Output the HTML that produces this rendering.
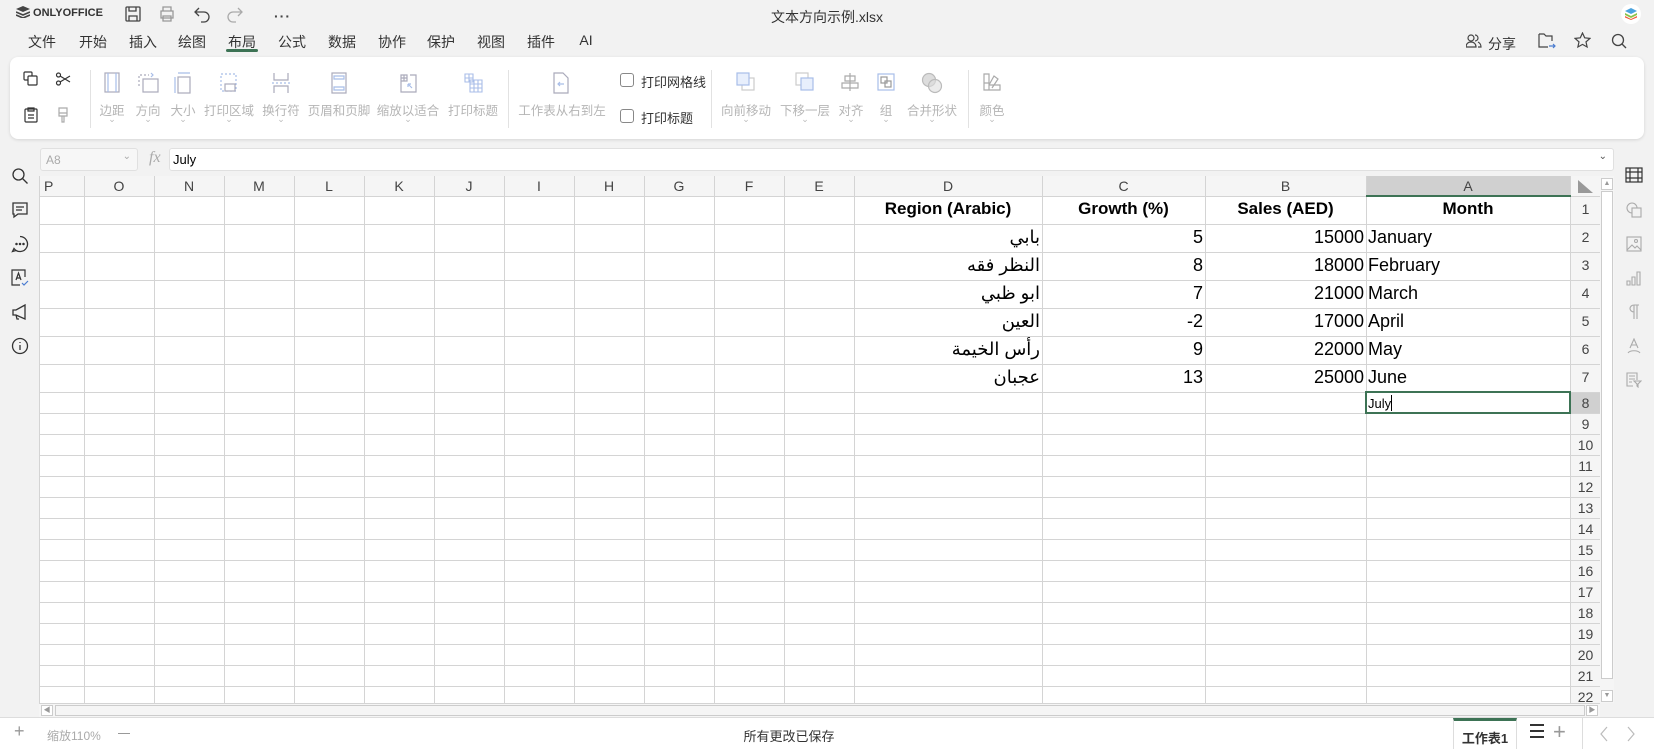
<!DOCTYPE html>
<html><head><meta charset="utf-8">
<style>
*{margin:0;padding:0;box-sizing:border-box}
body{width:1654px;height:749px;background:#f2f2f2;font-family:"Liberation Sans","Noto Sans CJK SC",sans-serif;position:relative;overflow:hidden;color:#333}
.a{position:absolute}
.tab{position:absolute;top:32px;font-size:14px;color:#333;transform:translateX(-50%)}
.lab{position:absolute;top:100px;font-size:12.5px;color:#b5b5b5;transform:translateX(-50%);white-space:nowrap}
.chev{position:absolute;top:114px;font-size:9px;color:#bbb;transform:translateX(-50%)}
.ic{position:absolute;top:72px;transform:translateX(-50%)}
.sep{position:absolute;top:70px;width:1px;height:58px;background:#e2e2e2}
.vl{position:absolute;top:176px;height:527px;width:1px;background:#d4d4d4}
.hl{position:absolute;left:39px;width:1532px;height:1px;background:#d4d4d4}
.ch{position:absolute;top:176px;height:20px;font-size:14px;color:#444;text-align:center;line-height:20px}
.rh{position:absolute;left:1571px;width:29px;text-align:center;font-size:14px;color:#444}
.c{position:absolute;font-size:18px;color:#000;white-space:nowrap;font-family:"Liberation Sans","DejaVu Sans",sans-serif}
.si{position:absolute}
</style></head><body>
<!-- title bar -->
<div class="a" style="left:16px;top:6px;font-size:11px;font-weight:bold;color:#333;letter-spacing:0">
<svg width="14" height="12" viewBox="0 0 14 12" style="vertical-align:-2px"><path d="M7 0L14 3 7 6 0 3z" fill="#444"/><path d="M0 6l7 3 7-3M0 9l7 3 7-3" stroke="#444" stroke-width="1.6" fill="none"/></svg> ONLYOFFICE</div>
<svg class="a" style="left:124px;top:5px" width="18" height="18" viewBox="0 0 18 18" fill="none" stroke="#444" stroke-width="1.3"><rect x="2" y="2" width="14" height="14" rx="1"/><path d="M5 2v4h7V2M5 16v-5h8v5"/></svg>
<svg class="a" style="left:158px;top:5px" width="18" height="18" viewBox="0 0 18 18" fill="none" stroke="#999" stroke-width="1.3"><path d="M5 6V2h8v4M3 6h12v7H3zM5 11h8v5H5z"/></svg>
<svg class="a" style="left:193px;top:5px" width="18" height="18" viewBox="0 0 18 18" fill="none" stroke="#444" stroke-width="1.3"><path d="M6 3L2 7l4 4M2 7h9a5 5 0 010 10H8"/></svg>
<svg class="a" style="left:226px;top:5px" width="18" height="18" viewBox="0 0 18 18" fill="none" stroke="#aaa" stroke-width="1.3"><path d="M12 3l4 4-4 4M16 7H7a5 5 0 000 10h3"/></svg>
<div class="a" style="left:274px;top:8px;font-size:14px;color:#444;font-weight:bold;letter-spacing:1px">···</div>
<div class="a" style="left:0;width:1654px;top:7px;text-align:center;font-size:14px;color:#333">文本方向示例.xlsx</div>
<div class="a" style="left:1621px;top:4px;width:20px;height:20px;border-radius:50%;background:#fff"></div>
<svg class="a" style="left:1625px;top:8px" width="12" height="12" viewBox="0 0 12 12"><path d="M6 0l6 3-6 3-6-3z" fill="#4aa3df"/><path d="M0 5l6 3 6-3v2l-6 3-6-3z" fill="#8bc34a"/><path d="M0 8l6 3 6-3v1.5L6 12 0 9.5z" fill="#f05a3a"/></svg>
<!-- tabs -->
<div class="tab" style="left:42px">文件</div><div class="tab" style="left:93px">开始</div><div class="tab" style="left:143px">插入</div><div class="tab" style="left:192px">绘图</div><div class="tab" style="left:242px">布局</div><div class="tab" style="left:292px">公式</div><div class="tab" style="left:342px">数据</div><div class="tab" style="left:392px">协作</div><div class="tab" style="left:441px">保护</div><div class="tab" style="left:491px">视图</div><div class="tab" style="left:541px">插件</div><div class="tab" style="left:586px">AI</div>
<div class="a" style="left:226px;top:49px;width:32px;height:3px;border-radius:2px;background:#3d7355"></div>
<svg class="a" style="left:1466px;top:34px" width="16" height="14" viewBox="0 0 16 14" fill="none" stroke="#444" stroke-width="1.2"><circle cx="5" cy="4" r="3"/><path d="M0 13c0-3 2-5 5-5s5 2 5 5zM9 1a3 3 0 010 6M12 8c2 1 3 3 3 5h-3"/></svg>
<div class="a" style="left:1488px;top:34px;font-size:14px;color:#333">分享</div>
<svg class="a" style="left:1538px;top:33px" width="18" height="16" viewBox="0 0 18 16" fill="none" stroke="#444" stroke-width="1.2"><path d="M1 1h5l2 2h6v5M1 1v13h9"/><path d="M11 13h6M15 11l2 2-2 2" stroke="#4a7bd0"/></svg>
<svg class="a" style="left:1574px;top:32px" width="17" height="17" viewBox="0 0 17 17" fill="none" stroke="#444" stroke-width="1.2"><path d="M8.5 1l2.2 4.8 5.2.6-3.9 3.5 1.1 5.1-4.6-2.6-4.6 2.6 1.1-5.1L1.1 6.4l5.2-.6z"/></svg>
<svg class="a" style="left:1611px;top:33px" width="16" height="16" viewBox="0 0 16 16" fill="none" stroke="#444" stroke-width="1.3"><circle cx="7" cy="7" r="5.5"/><path d="M11 11l4 4"/></svg>
<!-- ribbon -->
<div class="a" style="left:10px;top:57px;width:1634px;height:82px;background:#fff;border-radius:8px;box-shadow:0 1px 3px rgba(0,0,0,.12)"></div>
<svg class="a" style="left:23px;top:71px" width="16" height="16" viewBox="0 0 16 16" fill="none" stroke="#333" stroke-width="1.2"><rect x="1" y="1" width="8" height="8" rx="1"/><rect x="5" y="5" width="9" height="9" rx="1" fill="#fff"/></svg>
<svg class="a" style="left:55px;top:71px" width="16" height="16" viewBox="0 0 16 16" fill="none" stroke="#333" stroke-width="1.2"><circle cx="3.5" cy="4" r="2"/><circle cx="3.5" cy="12" r="2"/><path d="M5 5l10 6M5 11l10-6"/></svg>
<svg class="a" style="left:23px;top:107px" width="16" height="16" viewBox="0 0 16 16" fill="none" stroke="#333" stroke-width="1.2"><rect x="2" y="2" width="12" height="13" rx="1"/><path d="M5 1h6v3H5zM5 8h6M5 11h6"/></svg>
<svg class="a" style="left:55px;top:107px" width="16" height="16" viewBox="0 0 16 16" fill="none" stroke="#aaa" stroke-width="1.2"><path d="M4 1h8v8H4zM4 6h8M7 9v6h2V9"/></svg>
<div class="sep" style="left:90px"></div><div class="sep" style="left:508px"></div><div class="sep" style="left:711px"></div><div class="sep" style="left:968px"></div>
<svg class="ic" style="left:112px" width="20" height="22" viewBox="0 0 20 22" fill="none" stroke="#aab" stroke-width="1.2"><rect x="3" y="1" width="14" height="19"/><path d="M6 1v19M14 1v19" stroke="#a8bde8"/></svg>
<svg class="ic" style="left:148px" width="22" height="22" viewBox="0 0 22 22" fill="none" stroke="#aab" stroke-width="1.2"><rect x="6" y="7" width="15" height="13"/><path d="M2 14V3h10" stroke-dasharray="2 2"/><path d="M14 1l2 2-2 2" stroke="#a8bde8"/></svg>
<svg class="ic" style="left:183px" width="20" height="22" viewBox="0 0 20 22" fill="none" stroke="#aab" stroke-width="1.2"><rect x="5" y="5" width="12" height="16"/><path d="M5 1h12M2 5v16" stroke="#a8bde8"/></svg>
<svg class="ic" style="left:229px" width="20" height="22" viewBox="0 0 20 22" fill="none" stroke="#aab" stroke-width="1.2"><path d="M2 2h15v17H2z" stroke-dasharray="2 2" stroke="#a8bde8"/><rect x="6" y="12" width="10" height="7" fill="#fff"/></svg>
<svg class="ic" style="left:281px" width="20" height="22" viewBox="0 0 20 22" fill="none" stroke="#aab" stroke-width="1.2"><path d="M3 1v7h14V1M3 21v-7h14v7"/><path d="M1 11h18" stroke-dasharray="2 2" stroke="#a8bde8"/></svg>
<svg class="ic" style="left:339px" width="18" height="22" viewBox="0 0 18 22" fill="none" stroke="#aab" stroke-width="1.2"><rect x="2" y="1" width="14" height="20"/><path d="M4 4h10v3H4zM4 15h10v3H4z" stroke="#a8bde8"/></svg>
<svg class="ic" style="left:408px" width="20" height="22" viewBox="0 0 20 22" fill="none" stroke="#aab" stroke-width="1.2"><path d="M3 8v12h15V3h-6M3 3h6v6H3zM6 3v6M3 6h6"/><path d="M14 16l-4-4M10 12v3M10 12h3" stroke="#a8bde8"/></svg>
<svg class="ic" style="left:473px" width="20" height="22" viewBox="0 0 20 22" fill="none" stroke="#a8bde8" stroke-width="1.1"><path d="M2 2h8v8H2zM6 2v8M2 6h8M7 8h12v12H7zM11 8v12M15 8v12M7 12h12M7 16h12"/></svg>
<svg class="ic" style="left:561px" width="18" height="22" viewBox="0 0 18 22" fill="none" stroke="#aab" stroke-width="1.2"><path d="M2 1h9l5 5v15H2z"/><path d="M12 12H6M8 10l-2 2 2 2" stroke="#a8bde8"/></svg>
<div class="a" style="left:620px;top:73px;width:14px;height:14px;border:1px solid #888;border-radius:3px"></div>
<div class="a" style="left:641px;top:72px;font-size:13px;color:#333">打印网格线</div>
<div class="a" style="left:620px;top:109px;width:14px;height:14px;border:1px solid #888;border-radius:3px"></div>
<div class="a" style="left:641px;top:108px;font-size:13px;color:#333">打印标题</div>
<svg class="ic" style="left:746px" width="20" height="20" viewBox="0 0 20 20" fill="none" stroke="#a8bde8" stroke-width="1.2"><rect x="6" y="6" width="12" height="12" stroke="#ccc"/><rect x="1" y="1" width="12" height="12" fill="#e8effc"/></svg>
<svg class="ic" style="left:805px" width="20" height="20" viewBox="0 0 20 20" fill="none" stroke="#ccc" stroke-width="1.2"><rect x="1" y="1" width="12" height="12"/><rect x="6" y="6" width="12" height="12" fill="#e8effc" stroke="#a8bde8"/></svg>
<svg class="ic" style="left:850px" width="20" height="20" viewBox="0 0 20 20" fill="none" stroke="#aaa" stroke-width="1.2"><path d="M10 1v18M5 4h10v5H5zM2 11h16v5H2z"/></svg>
<svg class="ic" style="left:886px" width="20" height="20" viewBox="0 0 20 20" fill="none" stroke="#a8bde8" stroke-width="1.2"><rect x="2" y="2" width="16" height="16"/><rect x="5" y="5" width="6" height="6" stroke="#999"/><rect x="9" y="9" width="6" height="6" stroke="#999"/></svg>
<svg class="ic" style="left:932px" width="22" height="22" viewBox="0 0 22 22" fill="#ddd" stroke="#bbb" stroke-width="1.2"><circle cx="8" cy="8" r="6.5"/><circle cx="14" cy="14" r="6.5" fill-opacity=".6"/></svg>
<svg class="ic" style="left:992px" width="20" height="20" viewBox="0 0 20 20" fill="none" stroke="#aaa" stroke-width="1.2"><path d="M2 2h5v16H2zM2 11h5M7 18h11v-5H7M7 13l5-9 4 3-6 9"/></svg>
<div class="lab" style="left:112px">边距</div><div class="lab" style="left:148px">方向</div><div class="lab" style="left:183px">大小</div><div class="lab" style="left:229px">打印区域</div><div class="lab" style="left:281px">换行符</div><div class="lab" style="left:339px">页眉和页脚</div><div class="lab" style="left:408px">缩放以适合</div><div class="lab" style="left:473px">打印标题</div><div class="lab" style="left:562px">工作表从右到左</div><div class="lab" style="left:746px">向前移动</div><div class="lab" style="left:805px">下移一层</div><div class="lab" style="left:851px">对齐</div><div class="lab" style="left:886px">组</div><div class="lab" style="left:932px">合并形状</div><div class="lab" style="left:992px">颜色</div>
<div class="chev" style="left:112px">⌄</div><div class="chev" style="left:148px">⌄</div><div class="chev" style="left:183px">⌄</div><div class="chev" style="left:229px">⌄</div><div class="chev" style="left:281px">⌄</div><div class="chev" style="left:408px">⌄</div><div class="chev" style="left:746px">⌄</div><div class="chev" style="left:805px">⌄</div><div class="chev" style="left:851px">⌄</div><div class="chev" style="left:886px">⌄</div><div class="chev" style="left:932px">⌄</div><div class="chev" style="left:992px">⌄</div>
<!-- formula bar -->
<div class="a" style="left:40px;top:148px;width:98px;height:23px;border:1px solid #e0e0e0;border-radius:3px;background:#f7f7f7;font-size:12px;color:#aaa;padding:4px 5px">A8<span style="position:absolute;right:6px;top:2px;font-size:10px">⌄</span></div>
<div class="a" style="left:149px;top:149px;font-size:16px;color:#aaa;font-style:italic;font-family:'Liberation Serif',serif">fx</div>
<div class="a" style="left:169px;top:148px;width:1445px;height:23px;border:1px solid #e0e0e0;border-radius:3px;background:#fff;font-size:13px;color:#000;padding:3px 3px">July<span style="position:absolute;right:6px;top:2px;font-size:10px;color:#555">⌄</span></div>
<!-- left sidebar -->
<svg class="si" style="left:11px;top:167px" width="18" height="18" viewBox="0 0 18 18" fill="none" stroke="#333" stroke-width="1.3"><circle cx="7.5" cy="7.5" r="5.5"/><path d="M11.5 11.5l5 5"/></svg>
<svg class="si" style="left:11px;top:201px" width="18" height="18" viewBox="0 0 18 18" fill="none" stroke="#333" stroke-width="1.3"><path d="M2 2h14v11H7l-4 3v-3H2z"/><path d="M5 6h8M5 9h6"/></svg>
<svg class="si" style="left:11px;top:235px" width="18" height="18" viewBox="0 0 18 18" fill="none" stroke="#333" stroke-width="1.3"><path d="M9 1.5a7.5 7.5 0 11-6 12l-1.5 3 3.5-1"/><circle cx="5.5" cy="9" r=".6"/><circle cx="9" cy="9" r=".6"/><circle cx="12.5" cy="9" r=".6"/></svg>
<svg class="si" style="left:11px;top:269px" width="18" height="18" viewBox="0 0 18 18" fill="none" stroke="#333" stroke-width="1.2"><path d="M14 8V1H1v15h8"/><path d="M5 11l2.5-7L10 11M6 9h3"/><path d="M11 14l2 2 4-4" stroke="#4a7bd0"/></svg>
<svg class="si" style="left:11px;top:303px" width="18" height="18" viewBox="0 0 18 18" fill="none" stroke="#333" stroke-width="1.3"><path d="M2 7v5h3l9 4V2L5 7zM5 12l1 4h2"/></svg>
<svg class="si" style="left:11px;top:337px" width="18" height="18" viewBox="0 0 18 18" fill="none" stroke="#333" stroke-width="1.3"><circle cx="9" cy="9" r="7.5"/><path d="M9 8v5M9 5v1"/></svg>
<!-- right sidebar -->
<svg class="si" style="left:1625px;top:167px" width="18" height="16" viewBox="0 0 18 16" fill="none" stroke="#333" stroke-width="1.2"><rect x="1" y="1" width="16" height="14"/><path d="M1 5h16M1 11h16M5 1v14M13 1v14"/></svg>
<svg class="si" style="left:1626px;top:202px" width="16" height="16" viewBox="0 0 16 16" fill="none" stroke="#aaa" stroke-width="1.1"><circle cx="6" cy="6" r="5"/><rect x="6" y="6" width="9" height="9" fill="#f2f2f2"/></svg>
<svg class="si" style="left:1626px;top:236px" width="16" height="16" viewBox="0 0 16 16" fill="none" stroke="#aaa" stroke-width="1.1"><rect x="1" y="1" width="14" height="14"/><path d="M1 14l5-5 3 3 2-2 4 4"/><circle cx="10" cy="5" r="1.5"/></svg>
<svg class="si" style="left:1626px;top:270px" width="16" height="16" viewBox="0 0 16 16" fill="none" stroke="#aaa" stroke-width="1.1"><path d="M1 11h3v4H1zM6 7h3v8H6zM11 2h3v13h-3z"/></svg>
<svg class="si" style="left:1626px;top:304px" width="16" height="16" viewBox="0 0 16 16" fill="none" stroke="#aaa" stroke-width="1.1"><path d="M8 15V1h5M11 1v14M8 8a4 3.5 0 010-7"/></svg>
<svg class="si" style="left:1626px;top:338px" width="16" height="16" viewBox="0 0 16 16" fill="none" stroke="#aaa" stroke-width="1.1"><path d="M4 10l4-9 4 9M5.5 7h5M2 15c2-3 10-3 12 0"/></svg>
<svg class="si" style="left:1626px;top:372px" width="16" height="16" viewBox="0 0 16 16" fill="none" stroke="#aaa" stroke-width="1.1"><path d="M11 8V1H1v13h6M3 4h6M3 7h6M3 10h3M8 9h7l-3 3v3l-1-1v-2z"/></svg>
<!-- grid -->
<div class="a" style="left:39px;top:176px;width:1561px;height:527px;background:#fff"></div>
<div class="a" style="left:39px;top:176px;width:1532px;height:20px;background:#f5f5f5"></div>
<div class="a" style="left:1366px;top:176px;width:204px;height:20px;background:#d0d0d0"></div>
<div class="a" style="left:1571px;top:176px;width:29px;height:527px;background:#f5f5f5"></div>
<div class="a" style="left:1571px;top:392px;width:29px;height:21px;background:#d0d0d0"></div>
<svg class="a" style="left:1576px;top:179px" width="18" height="15"><path d="M2 1v13h15z" fill="#999"/></svg>
<div class="vl" style="left:39px"></div><div class="vl" style="left:84px"></div><div class="vl" style="left:154px"></div><div class="vl" style="left:224px"></div><div class="vl" style="left:294px"></div><div class="vl" style="left:364px"></div><div class="vl" style="left:434px"></div><div class="vl" style="left:504px"></div><div class="vl" style="left:574px"></div><div class="vl" style="left:644px"></div><div class="vl" style="left:714px"></div><div class="vl" style="left:784px"></div><div class="vl" style="left:854px"></div><div class="vl" style="left:1042px"></div><div class="vl" style="left:1205px"></div><div class="vl" style="left:1366px"></div><div class="vl" style="left:1570px"></div><div class="vl" style="left:1600px"></div>
<div class="hl" style="top:196px;width:1561px"></div>
<div class="hl" style="top:224px;width:1561px"></div><div class="hl" style="top:252px;width:1561px"></div><div class="hl" style="top:280px;width:1561px"></div><div class="hl" style="top:308px;width:1561px"></div><div class="hl" style="top:336px;width:1561px"></div><div class="hl" style="top:364px;width:1561px"></div><div class="hl" style="top:392px;width:1561px"></div><div class="hl" style="top:413px;width:1561px"></div><div class="hl" style="top:434px;width:1561px"></div><div class="hl" style="top:455px;width:1561px"></div><div class="hl" style="top:476px;width:1561px"></div><div class="hl" style="top:497px;width:1561px"></div><div class="hl" style="top:518px;width:1561px"></div><div class="hl" style="top:539px;width:1561px"></div><div class="hl" style="top:560px;width:1561px"></div><div class="hl" style="top:581px;width:1561px"></div><div class="hl" style="top:602px;width:1561px"></div><div class="hl" style="top:623px;width:1561px"></div><div class="hl" style="top:644px;width:1561px"></div><div class="hl" style="top:665px;width:1561px"></div><div class="hl" style="top:686px;width:1561px"></div>
<div class="a" style="left:1366px;top:195px;width:205px;height:2px;background:#3d7355"></div>
<div class="ch" style="left:39px;width:45px;text-align:left;padding-left:5px">P</div><div class="ch" style="left:84px;width:70px">O</div><div class="ch" style="left:154px;width:70px">N</div><div class="ch" style="left:224px;width:70px">M</div><div class="ch" style="left:294px;width:70px">L</div><div class="ch" style="left:364px;width:70px">K</div><div class="ch" style="left:434px;width:70px">J</div><div class="ch" style="left:504px;width:70px">I</div><div class="ch" style="left:574px;width:70px">H</div><div class="ch" style="left:644px;width:70px">G</div><div class="ch" style="left:714px;width:70px">F</div><div class="ch" style="left:784px;width:70px">E</div><div class="ch" style="left:854px;width:188px">D</div><div class="ch" style="left:1042px;width:163px">C</div><div class="ch" style="left:1205px;width:161px">B</div><div class="ch" style="left:1366px;width:204px">A</div>
<div class="rh" style="top:201px">1</div><div class="rh" style="top:229px">2</div><div class="rh" style="top:257px">3</div><div class="rh" style="top:285px">4</div><div class="rh" style="top:313px">5</div><div class="rh" style="top:341px">6</div><div class="rh" style="top:369px">7</div><div class="rh" style="top:395px">8</div>
<div class="rh" style="top:416px">9</div><div class="rh" style="top:437px">10</div><div class="rh" style="top:458px">11</div><div class="rh" style="top:479px">12</div><div class="rh" style="top:500px">13</div><div class="rh" style="top:521px">14</div><div class="rh" style="top:542px">15</div><div class="rh" style="top:563px">16</div><div class="rh" style="top:584px">17</div><div class="rh" style="top:605px">18</div><div class="rh" style="top:626px">19</div><div class="rh" style="top:647px">20</div><div class="rh" style="top:668px">21</div><div class="rh" style="top:689px">22</div>
<!-- cells -->
<div class="c" style="left:854px;width:188px;top:199px;text-align:center;font-weight:bold;font-size:17px">Region (Arabic)</div>
<div class="c" style="left:1042px;width:163px;top:199px;text-align:center;font-weight:bold;font-size:17px">Growth (%)</div>
<div class="c" style="left:1205px;width:161px;top:199px;text-align:center;font-weight:bold;font-size:17px">Sales (AED)</div>
<div class="c" style="left:1366px;width:204px;top:199px;text-align:center;font-weight:bold;font-size:17px">Month</div>
<div class="c" style="left:854px;width:186px;top:227px;text-align:right" dir="rtl">بابي</div>
<div class="c" style="left:854px;width:186px;top:255px;text-align:right" dir="rtl">النظر فقه</div>
<div class="c" style="left:854px;width:186px;top:283px;text-align:right" dir="rtl">ابو ظبي</div>
<div class="c" style="left:854px;width:186px;top:311px;text-align:right" dir="rtl">العين</div>
<div class="c" style="left:854px;width:186px;top:339px;text-align:right" dir="rtl">رأس الخيمة</div>
<div class="c" style="left:854px;width:186px;top:367px;text-align:right" dir="rtl">عجبان</div>
<div class="c" style="left:1042px;width:161px;top:227px;text-align:right">5</div><div class="c" style="left:1042px;width:161px;top:255px;text-align:right">8</div><div class="c" style="left:1042px;width:161px;top:283px;text-align:right">7</div><div class="c" style="left:1042px;width:161px;top:311px;text-align:right">-2</div><div class="c" style="left:1042px;width:161px;top:339px;text-align:right">9</div><div class="c" style="left:1042px;width:161px;top:367px;text-align:right">13</div>
<div class="c" style="left:1205px;width:159px;top:227px;text-align:right">15000</div><div class="c" style="left:1205px;width:159px;top:255px;text-align:right">18000</div><div class="c" style="left:1205px;width:159px;top:283px;text-align:right">21000</div><div class="c" style="left:1205px;width:159px;top:311px;text-align:right">17000</div><div class="c" style="left:1205px;width:159px;top:339px;text-align:right">22000</div><div class="c" style="left:1205px;width:159px;top:367px;text-align:right">25000</div>
<div class="c" style="left:1368px;top:227px">January</div><div class="c" style="left:1368px;top:255px">February</div><div class="c" style="left:1368px;top:283px">March</div><div class="c" style="left:1368px;top:311px">April</div><div class="c" style="left:1368px;top:339px">May</div><div class="c" style="left:1368px;top:367px">June</div>
<div class="a" style="left:1365px;top:391px;width:206px;height:23px;border:2px solid #3d7355"></div>
<div class="c" style="left:1368px;top:395px;font-size:13px">July<span style="display:inline-block;width:1px;height:16px;background:#000;vertical-align:-3px"></span></div>
<!-- scrollbars -->
<div class="a" style="left:1600px;top:176px;width:14px;height:527px;background:#f5f5f5"></div>
<div class="a" style="left:1601px;top:178px;width:12px;height:12px;border:1px solid #ccc;background:#fff;font-size:7px;color:#999;text-align:center;line-height:10px">▲</div>
<div class="a" style="left:1601px;top:191px;width:12px;height:488px;border:1px solid #ccc;background:#fff"></div>
<div class="a" style="left:1601px;top:690px;width:12px;height:12px;border:1px solid #ccc;background:#fff;font-size:7px;color:#999;text-align:center;line-height:10px">▼</div>
<div class="a" style="left:39px;top:703px;width:1561px;height:14px;background:#f5f5f5;border-top:1px solid #d4d4d4"></div>
<div class="a" style="left:41px;top:705px;width:12px;height:11px;border:1px solid #ccc;background:#fff;font-size:7px;color:#999;line-height:9px;text-align:center">◀</div>
<div class="a" style="left:55px;top:705px;width:1530px;height:11px;border:1px solid #ccc;background:#f5f5f5"></div>
<div class="a" style="left:1586px;top:705px;width:12px;height:11px;border:1px solid #ccc;background:#fff;font-size:7px;color:#999;line-height:9px;text-align:center">▶</div>
<!-- status bar -->
<div class="a" style="left:0;top:717px;width:1654px;height:32px;background:#fff;border-top:1px solid #ddd"></div>
<div class="a" style="left:14px;top:721px;font-size:18px;color:#999;font-weight:200">+</div>
<div class="a" style="left:47px;top:727px;font-size:12px;color:#aaa">缩放110%</div>
<div class="a" style="left:118px;top:733px;width:12px;height:1px;background:#999"></div>
<div class="a" style="left:0;width:1578px;top:726px;font-size:13px;color:#333;text-align:center">所有更改已保存</div>
<div class="a" style="left:1453px;top:718px;width:64px;height:31px;border-left:1px solid #ddd;border-right:1px solid #ddd;border-top:3px solid #3d7355;font-size:13px;font-weight:bold;text-align:center;padding-top:7px">工作表1</div>
<div class="a" style="left:1530px;top:724px;width:14px"><div style="height:2px;background:#333;margin-bottom:4px"></div><div style="height:2px;background:#333;margin-bottom:4px"></div><div style="height:2px;background:#333"></div></div>
<div class="a" style="left:1553px;top:719px;font-size:22px;color:#999;font-weight:200">+</div>
<div class="a" style="left:1582px;top:718px;width:1px;height:31px;background:#ddd"></div>
<svg class="a" style="left:1599px;top:726px" width="10" height="16"><path d="M8 1L2 8l6 7" fill="none" stroke="#bbb" stroke-width="1.2"/></svg>
<svg class="a" style="left:1626px;top:726px" width="10" height="16"><path d="M2 1l6 7-6 7" fill="none" stroke="#bbb" stroke-width="1.2"/></svg>
</body></html>
